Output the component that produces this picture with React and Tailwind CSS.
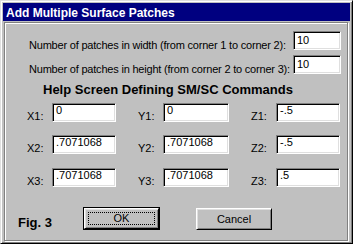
import React from "react";

const sunken =
  "bg-white border border-t-[#808080] border-l-[#808080] border-r-white border-b-white shadow-[inset_1px_1px_0_#000,inset_-1px_-1px_0_#dfdfdf] text-[11px] leading-[13px] text-black pl-[3px]";

const raised =
  "bg-[#c0c0c0] border border-t-white border-l-white border-r-black border-b-black shadow-[inset_1px_1px_0_#dfdfdf,inset_-1px_-1px_0_#808080]";

function Field({ value, width, top = "pt-0" }) {
  return <div className={`${sunken} ${width} ${top} h-[19px]`}>{value}</div>;
}

function Coord({ label, value, width, gap }) {
  return (
    <div className={`flex ${gap}`}>
      <div className="w-[25px] h-[19px] pt-[7px] text-[11px] leading-[13px] text-black">
        {label}
      </div>
      <Field value={value} width={width} />
    </div>
  );
}

const ROWS = [
  ["1", "0", "0", "-.5"],
  ["2", ".7071068", ".7071068", "-.5"],
  ["3", ".7071068", ".7071068", ".5"],
];

export default function App() {
  return (
    <div className="w-[353px] h-[244px] bg-[#c0c0c0] font-['Liberation_Sans',Arial,sans-serif] border border-t-[#dfdfdf] border-l-[#dfdfdf] border-r-black border-b-black shadow-[inset_1px_1px_0_#fff,inset_-1px_-1px_0_#808080] p-[2px] flex flex-col">
      {/* title bar */}
      <div className="h-[18px] bg-[#000080] text-white font-bold text-[12px] leading-[16px] pt-[2px] pl-[3px] whitespace-nowrap">
        Add Multiple Surface Patches
      </div>

      {/* etched panel */}
      <div className="ml-[1px] mt-[1px] w-[344px] h-[219px] border border-[#808080] shadow-[1px_1px_0_#fff,inset_1px_1px_0_#fff] flex flex-col">
        <div className="mt-[8px] flex pl-[24px]">
          <div className="w-[264px] h-[19px] pt-[8px] text-[11px] leading-[13px] tracking-[-0.2px] text-black whitespace-nowrap">
            Number of patches in width (from corner 1 to corner 2):
          </div>
          <Field value="10" width="w-[48px]" top="pt-[2px]" />
        </div>
        <div className="mt-[5px] flex pl-[24px]">
          <div className="w-[264px] h-[19px] pt-[8px] text-[11px] leading-[13px] tracking-[-0.2px] text-black whitespace-nowrap">
            Number of patches in height (from corner 2 to corner 3):
          </div>
          <Field value="10" width="w-[48px]" top="pt-[2px]" />
        </div>

        <div className="mt-[8px] pl-[38px] text-[13px] leading-[15px] font-bold text-black whitespace-nowrap">
          Help Screen Defining SM/SC Commands
        </div>

        {ROWS.map(([n, x, y, z], i) => (
          <div
            key={n}
            className={`flex pl-[22px] ${i === 0 ? "mt-[6px]" : i === 1 ? "mt-[13px]" : "mt-[14px]"}`}
          >
            <Coord label={`X${n}:`} value={x} width="w-[64px]" gap="" />
            <Coord label={`Y${n}:`} value={y} width="w-[66px]" gap="ml-[22px]" />
            <Coord label={`Z${n}:`} value={z} width="w-[64px]" gap="ml-[22px]" />
          </div>
        ))}

        <div className="mt-[20px] flex items-start pl-[13px]">
          <div className="w-[65px] pt-[8px] text-[13px] leading-[15px] font-bold text-black">
            Fig. 3
          </div>
          <div className="w-[77px] h-[23px] border border-black">
            <div className={`${raised} relative w-full h-full flex items-center justify-center text-[11px] leading-[13px] text-black`}>
              <div className="absolute inset-[3px] border border-dotted border-black" />
              OK
            </div>
          </div>
          <div
            className={`${raised} ml-[36px] mt-[1px] w-[76px] h-[22px] flex items-center justify-center text-[11px] leading-[13px] text-black`}
          >
            Cancel
          </div>
        </div>
      </div>
    </div>
  );
}
